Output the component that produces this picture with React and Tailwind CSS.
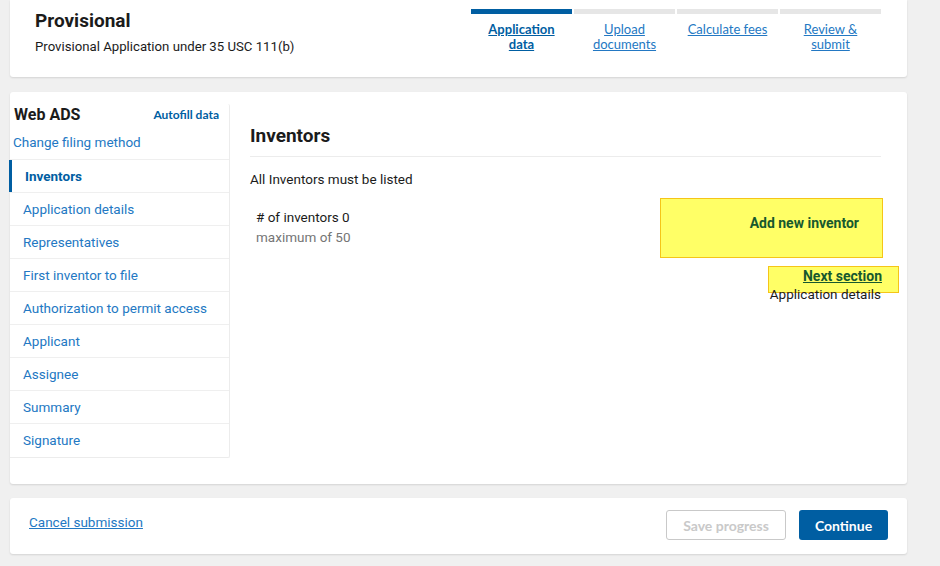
export default function App() {
  const steps = [
    { label: ["Application", "data"], active: true },
    { label: ["Upload", "documents"] },
    { label: ["Calculate fees"] },
    { label: ["Review &", "submit"] },
  ];
  const items = [
    "Inventors",
    "Application details",
    "Representatives",
    "First inventor to file",
    "Authorization to permit access",
    "Applicant",
    "Assignee",
    "Summary",
    "Signature",
  ];

  return (
    <div
      className="h-[566px] w-[940px] overflow-hidden bg-[#f0f0f0] pl-[10px] pr-[33px]"
      style={{ fontFamily: "Roboto, 'Liberation Sans', sans-serif" }}
    >
      {/* header card */}
      <div className="flex h-[77px] rounded-b-[3px] bg-white shadow-[0_1px_2px_rgba(0,0,0,0.12)]">
        <div className="pl-[25px] pt-[9px]">
          <h1 className="text-[19px] font-bold leading-[24px] text-[#1b1b1b]">Provisional</h1>
          <p className="mt-[5px] text-[13.2px] leading-[18px] text-[#1b1b1b]">
            Provisional Application under 35 USC 111(b)
          </p>
        </div>
        <div className="ml-auto mr-[26px] flex gap-[2px] pt-[9px]" style={{ fontFamily: "Lato, 'Open Sans', sans-serif" }}>
          {steps.map((s, i) => (
            <div key={i} className="w-[101px]">
              <div className={s.active ? "h-[5px] bg-[#005ea2]" : "h-[5px] bg-[#e6e6e6]"} />
              <a
                href="#"
                className={
                  "mt-[8px] block text-center text-[13px] leading-[15px] underline " +
                  (s.active ? "font-bold text-[#005ea2]" : "text-[#2378c3]")
                }
              >
                {s.label.map((l, j) => (
                  <span key={j} className="block">{l}</span>
                ))}
              </a>
            </div>
          ))}
        </div>
      </div>

      {/* main card */}
      <div className="mt-[15px] flex h-[392px] rounded-[3px] bg-white shadow-[0_1px_2px_rgba(0,0,0,0.12)]">
        <aside className="mt-[12px] h-[354px] w-[220px] shrink-0 rounded-r-[2px] border-r border-b border-[#ececec]">
          <div className="flex h-[22px] items-center justify-between pl-[4px] pr-[10px]">
            <span className="text-[16px] font-bold text-[#1b1b1b]">Web ADS</span>
            <a href="#" className="text-[12px] font-bold text-[#005ea2]" style={{ fontFamily: "Lato, sans-serif" }}>
              Autofill data
            </a>
          </div>
          <a href="#" className="mt-[7px] block pl-[3px] text-[13.5px] leading-[18px] text-[#2378c3]">
            Change filing method
          </a>
          <ul className="mt-[8px]">
            {items.map((it, i) => (
              <li
                key={it}
                className={
                  "relative flex h-[33px] items-center border-t border-[#efefef] text-[13.5px] " +
                  (i === 0 ? "pl-[15px] font-bold text-[#005ea2]" : "pl-[13px] text-[#2378c3]")
                }
              >
                {i === 0 && <span className="absolute left-[-1px] top-0 h-full w-[3px] bg-[#005ea2]" />}
                {it}
              </li>
            ))}
          </ul>
        </aside>

        <main className="flex-1 pl-[20px] pr-[26px] pt-[33px]">
          <h2 className="border-b border-[#ececec] pb-[9px] text-[19px] font-bold leading-[22px] text-[#1b1b1b]">
            Inventors
          </h2>
          <p className="mt-[13px] text-[13.5px] leading-[18px] text-[#1b1b1b]">All Inventors must be listed</p>
          <div className="mt-[10px] flex items-start justify-between">
            <div className="pl-[6px] pt-[10px]">
              <div className="text-[13.5px] leading-[18px] text-[#1b1b1b]"># of inventors 0</div>
              <div className="mt-[2px] text-[13.5px] leading-[18px] text-[#757575]">maximum of 50</div>
            </div>
            <button className="mr-[-2px] flex h-[60px] w-[223px] items-center justify-end border-[1.5px] border-[#f5c518] bg-[#ffff66] pr-[23px] pb-[9px] text-[14px] font-bold text-[#17592e]">
              Add new inventor
            </button>
          </div>
          <div className="mt-[8px] flex flex-col items-end">
            <a
              href="#"
              className="mr-[-18px] flex h-[27px] w-[131px] items-start justify-end border-[1.5px] border-[#f5c518] bg-[#ffff66] pr-[16px] text-[14px] font-bold leading-[18px] text-[#17592e] underline"
            >
              Next section
            </a>
            <span className="mt-[-8px] text-[13.5px] leading-[18px] text-[#1b1b1b]">Application details</span>
          </div>
        </main>
      </div>

      {/* footer card */}
      <div className="mt-[14px] flex h-[56px] items-start rounded-[3px] bg-white pl-[19px] pr-[19px] pt-[12px] shadow-[0_1px_2px_rgba(0,0,0,0.12)]">
        <a href="#" className="mt-[3px] text-[13.5px] leading-[18px] text-[#2378c3] underline">Cancel submission</a>
        <div className="ml-auto flex gap-[13px]" style={{ fontFamily: "Lato, 'Open Sans', sans-serif" }}>
          <button className="h-[30px] w-[120px] rounded-[3px] border-[1.5px] border-[#c9c9c9] bg-white text-[14px] font-bold text-[#c9c9c9]">
            Save progress
          </button>
          <button className="h-[30px] w-[89px] rounded-[3px] bg-[#005ea2] text-[14px] font-bold text-white">
            Continue
          </button>
        </div>
      </div>
    </div>
  );
}
